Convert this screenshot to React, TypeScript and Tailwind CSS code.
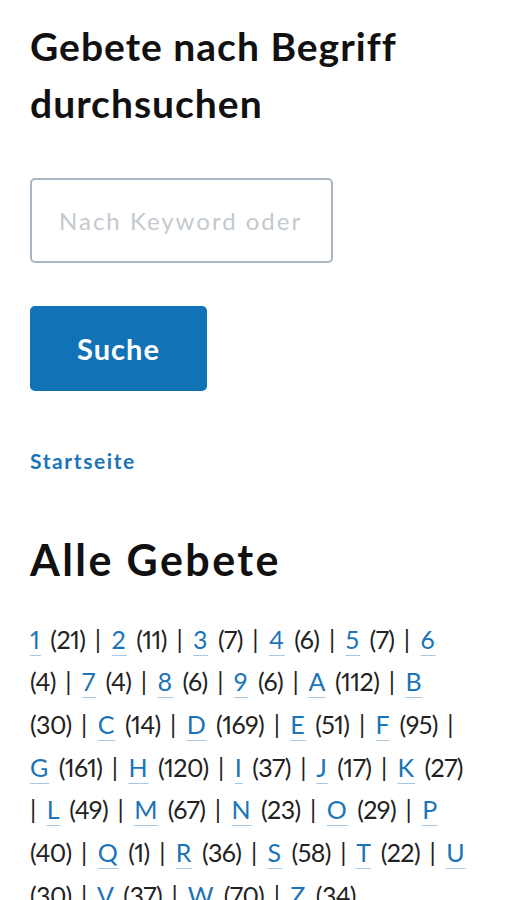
import React from 'react';

const entries: [string, number][] = [
  ['1', 21], ['2', 11], ['3', 7], ['4', 6], ['5', 7], ['6', 4], ['7', 4], ['8', 6], ['9', 6],
  ['A', 112], ['B', 30], ['C', 14], ['D', 169], ['E', 51], ['F', 95], ['G', 161], ['H', 120],
  ['I', 37], ['J', 17], ['K', 27], ['L', 49], ['M', 67], ['N', 23], ['O', 29], ['P', 40],
  ['Q', 1], ['R', 36], ['S', 58], ['T', 22], ['U', 30], ['V', 37], ['W', 70], ['Z', 34],
];

export default function App() {
  return (
    <div className="min-h-[900px] bg-white px-[30px] pt-[18px] text-[#1a1a1a] [font-family:Lato,'Noto_Sans',sans-serif]">
      <h2 className="text-[39px] font-bold leading-[57px] tracking-[1px] text-[#111]">Gebete nach Begriff durchsuchen</h2>

      <form className="mt-[46px] flex flex-col items-start" onSubmit={(e) => e.preventDefault()}>
        <input
          type="text"
          placeholder="Nach Keyword oder Begriff"
          className="h-[85px] w-[303px] rounded-[5px] border-2 border-[#a9b5c2] pl-[27px] pr-[22px] text-[24px] tracking-[2px] outline-none placeholder:text-[#c3c9cf]"
        />
        <button
          type="submit"
          className="mt-[43px] h-[85px] w-[177px] rounded-[5px] bg-[#1172b6] text-[29px] font-bold tracking-[1px] text-white"
        >
          Suche
        </button>
      </form>

      <a href="#" className="mt-[56px] block text-[21px] font-bold leading-[28px] tracking-[1.6px] text-[#1b74b8]">Startseite</a>

      <h1 className="mt-[59px] text-[43px] font-bold leading-[1.2] tracking-[2.4px] text-[#111]">Alle Gebete</h1>

      <p className="mt-[32px] max-w-[438px] text-[25px] leading-[42.7px] tracking-[0.9px] [word-spacing:2.2px] text-[#222] proportional-nums">
        {entries.map(([k, n], i) => (
          <React.Fragment key={k}>
            <a href="#" className="text-[#1b74b8] underline decoration-[#a8c8e2] decoration-1 underline-offset-[6px]">{k}</a>
            {' '}<span className="tracking-[-0.6px]">({n})</span>{i < entries.length - 1 ? ' | ' : ''}
          </React.Fragment>
        ))}
      </p>
    </div>
  );
}
